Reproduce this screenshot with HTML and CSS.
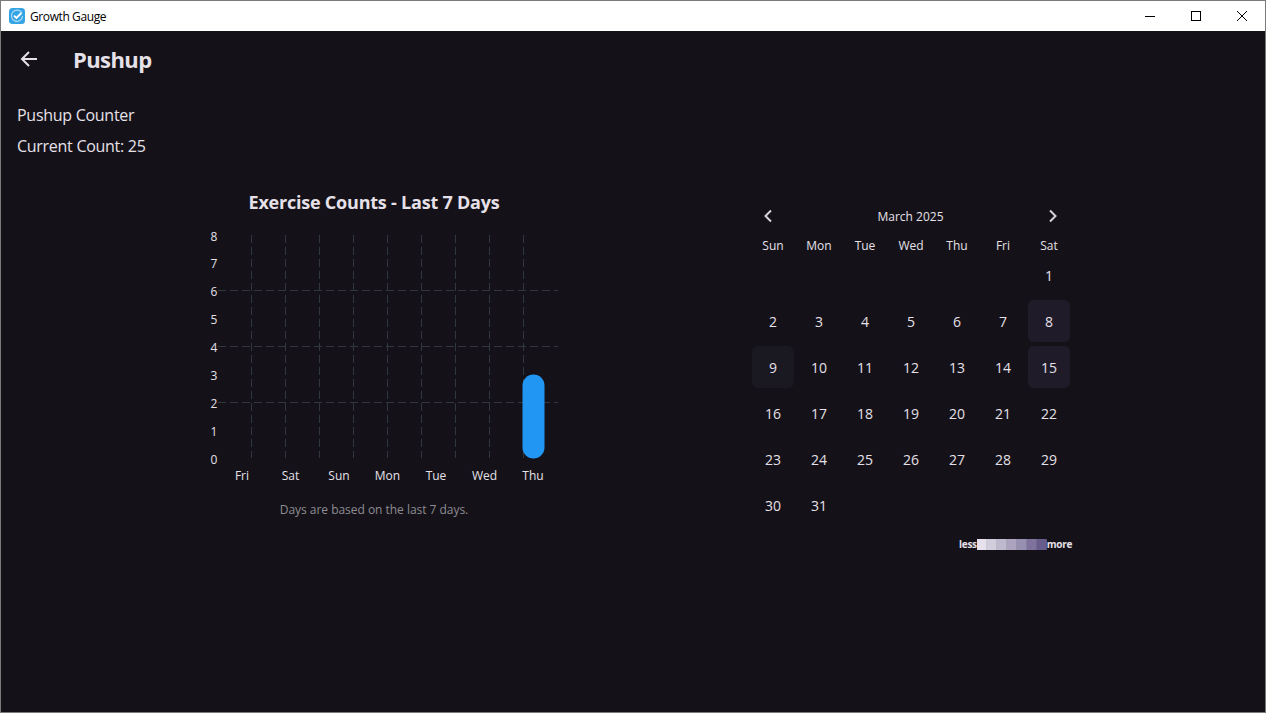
FILE: index.html
```html
<!DOCTYPE html>
<html lang="en">
<head>
    <meta charset="UTF-8">
    <title>Growth Gauge</title>
    <meta name="viewport" content="width=device-width, initial-scale=1.0">
    <link rel="stylesheet" href="styles.css">
</head>
<body>
    <div class="window">
        <header class="titlebar">
            <svg class="app-icon" width="16" height="16" viewBox="0 0 16 16">
                <rect width="16" height="16" rx="3.5" fill="#35a4e4"/>
                <path d="M13 5.2A5.6 5.6 0 1 0 13.6 8" fill="none" stroke="#a9d9f4" stroke-width="1.2"/>
                <path d="M5 7.6l2.4 2.4 5-5" fill="none" stroke="#fff" stroke-width="1.9"/>
            </svg>
            <span class="app-name">Growth Gauge</span>
            <div class="win-controls">
                <svg class="win-btn" width="46" height="30" viewBox="0 0 46 30"><path d="M18 15.5h10" stroke="#000"/></svg>
                <svg class="win-btn" width="46" height="30" viewBox="0 0 46 30"><rect x="18.5" y="10.5" width="9" height="9" fill="none" stroke="#000"/></svg>
                <svg class="win-btn" width="46" height="30" viewBox="0 0 46 30"><path d="M18 10l10 10M28 10l-10 10" stroke="#000"/></svg>
            </div>
        </header>

        <div class="appbar">
            <svg class="back" width="20" height="20" viewBox="0 0 20 20">
                <path d="M18 10H3M10 3l-7 7 7 7" fill="none" stroke="#e6e0e9" stroke-width="2"/>
            </svg>
            <h1>Pushup</h1>
        </div>

        <main class="content">
            <p class="line">Pushup Counter</p>
            <p class="line">Current Count: 25</p>

            <div class="panels">
                <section class="chart-panel">
                    <h2>Exercise Counts - Last 7 Days</h2>
                    <svg class="chart" width="370" height="264" viewBox="189 225 370 264">
                        <g class="grid">
                            <path d="M218 290.5H558M218 346.5H558M218 402.5H558"/>
                            <path d="M251.5 235V458M285.5 235V458M319.5 235V458M353.5 235V458M387.5 235V458M421.5 235V458M455.5 235V458M489.5 235V458M523.5 235V458"/>
                        </g>
                        <rect class="bar" x="522.500" y="374.500" width="22" height="84" rx="11"/>
                        <g class="y-labels">
                            <text x="214" y="241">8</text>
                            <text x="214" y="268">7</text>
                            <text x="214" y="296">6</text>
                            <text x="214" y="324">5</text>
                            <text x="214" y="352">4</text>
                            <text x="214" y="380">3</text>
                            <text x="214" y="408">2</text>
                            <text x="214" y="436">1</text>
                            <text x="214" y="464">0</text>
                        </g>
                        <g class="x-labels">
                            <text x="242" y="480">Fri</text>
                            <text x="290.500" y="480">Sat</text>
                            <text x="339" y="480">Sun</text>
                            <text x="387.500" y="480">Mon</text>
                            <text x="436" y="480">Tue</text>
                            <text x="484.500" y="480">Wed</text>
                            <text x="533" y="480">Thu</text>
                        </g>
                    </svg>
                    <p class="caption">Days are based on the last 7 days.</p>
                </section>

                <section class="calendar">
                    <div class="cal-head">
                        <svg width="10" height="14" viewBox="0 0 10 14"><path d="M8 1.500L2.500 7 8 12.500" fill="none" stroke="#d5d2da" stroke-width="2"/></svg>
                        <span>March 2025</span>
                        <svg width="10" height="14" viewBox="0 0 10 14"><path d="M2 1.500L7.500 7 2 12.500" fill="none" stroke="#d5d2da" stroke-width="2"/></svg>
                    </div>
                    <div class="cal-week">
                        <span>Sun</span><span>Mon</span><span>Tue</span><span>Wed</span><span>Thu</span><span>Fri</span><span>Sat</span>
                    </div>
                    <div class="cal-days">
                        <span></span><span></span><span></span><span></span><span></span><span></span><span>1</span>
                        <span>2</span><span>3</span><span>4</span><span>5</span><span>6</span><span>7</span><span class="hit-b">8</span>
                        <span class="hit-a">9</span><span>10</span><span>11</span><span>12</span><span>13</span><span>14</span><span class="hit-b">15</span>
                        <span>16</span><span>17</span><span>18</span><span>19</span><span>20</span><span>21</span><span>22</span>
                        <span>23</span><span>24</span><span>25</span><span>26</span><span>27</span><span>28</span><span>29</span>
                        <span>30</span><span>31</span>
                    </div>
                    <div class="legend">
                        <span>less</span>
                        <i class="s1"></i><i class="s2"></i><i class="s3"></i><i class="s4"></i><i class="s5"></i><i class="s6"></i><i class="s7"></i>
                        <span>more</span>
                    </div>
                </section>
            </div>
        </main>
    </div>
</body>
</html>
```

FILE: styles.css
```css
html { box-sizing: border-box; }
*, *:before, *:after { box-sizing: inherit; }
body {
    margin: 0;
    font-family: "Open Sans", "Noto Sans", sans-serif;
    background: #141218;
    color: #e6e0e9;
}
.window {
    width: 1266px;
    height: 713px;
    border: 1px solid #7a7a7a;
    overflow: hidden;
    display: flex;
    flex-direction: column;
}
.titlebar {
    height: 30px;
    flex: none;
    background: #fff;
    color: #000;
    display: flex;
    align-items: center;
    padding-left: 8px;
}
.app-name {
    font-size: 12px;
    letter-spacing: -0.4px;
    margin-left: 5px;
}
.win-controls {
    margin-left: auto;
    display: flex;
}
.win-btn { display: block; }

.appbar {
    height: 56px;
    flex: none;
    display: flex;
    align-items: center;
    padding-left: 18px;
}
.appbar h1 {
    margin: 0 0 0 34px;
    font-size: 22px;
    letter-spacing: -0.6px;
    font-weight: 700;
}
.back { display: block; }

.content {
    padding: 17px 0 0 16px;
}
.line {
    margin: 0 0 9px;
    font-size: 16px;
    letter-spacing: -0.28px;
    line-height: 22px;
}

.panels {
    display: flex;
    margin-top: 34px;
    margin-left: -16px;
}
.chart-panel {
    width: 370px;
    margin-left: 188px;
    text-align: center;
}
.chart-panel h2 {
    margin: -1px 0 0;
    font-size: 18px;
    letter-spacing: -0.22px;
    line-height: 24px;
}
.chart {
    display: block;
    margin-top: 11px;
}
.grid path {
    stroke: #2f383c;
    stroke-width: 1;
    stroke-dasharray: 8 4;
    fill: none;
}
.bar { fill: #2196f3; }
.y-labels text, .x-labels text {
    fill: #e6e0e9;
    font-size: 12px;
    text-anchor: middle;
}
.caption {
    margin: 13px 0 0;
    font-size: 12px;
    letter-spacing: -0.03px;
    line-height: 16px;
    color: #8e8c93;
}

.calendar {
    width: 322px;
    margin-left: 191px;
    margin-top: 11px;
}
.cal-head {
    height: 28px;
    display: flex;
    align-items: center;
    justify-content: space-between;
    padding: 0 14px 0 13px;
    font-size: 12px;
}
.cal-week {
    display: grid;
    grid-template-columns: repeat(7, 46px);
    height: 30px;
    align-items: center;
    text-align: center;
    font-size: 12px;
}
.cal-days {
    display: grid;
    grid-template-columns: repeat(7, 46px);
    grid-auto-rows: 46px;
    font-size: 14px;
    margin-top: -8px;
}
.cal-days span {
    display: flex;
    align-items: center;
    justify-content: center;
    margin: 2px;
    border-radius: 6px;
}
.hit-a { background: #1a1821; }
.hit-b { background: #201b29; }

.legend {
    display: flex;
    align-items: center;
    justify-content: flex-end;
    height: 14px;
    margin-top: 9px;
    font-size: 10px;
    letter-spacing: -0.3px;
    font-weight: 700;
}
.legend i {
    display: block;
    width: 10px;
    height: 11px;
    border-right: 1px solid rgba(20, 18, 24, 0.12);
}
.s1 { background: #e6e1ec; }
.s2 { background: #d2cddc; }
.s3 { background: #bfb9cd; }
.s4 { background: #aca4bf; }
.s5 { background: #9890b0; }
.s6 { background: #7f739e; }
.s7 { background: #685c8c; }
```
